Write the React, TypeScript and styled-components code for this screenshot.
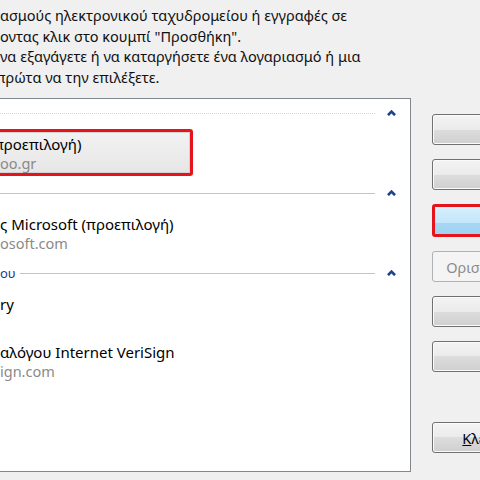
import styled, { createGlobalStyle, css } from "styled-components";

const GlobalStyle = createGlobalStyle`
  html, body {
    margin: 0;
    padding: 0;
    background: #f0f0f0;
    overflow: hidden;
  }
  body {
    font-family: "Noto Sans", "Open Sans", sans-serif;
  }
`;

const Dialog = styled.div`
  width: 480px;
  height: 480px;
  overflow: hidden;
  display: flex;
  flex-direction: column;
  background: #f0f0f0;
  color: #111;
`;

const Intro = styled.div`
  height: 98px;
  box-sizing: border-box;
  padding-top: 5px;
  font-size: 14.5px;
  line-height: 20.5px;
  white-space: nowrap;
`;

// part of a glyph that is cut by the window edge
const Clip = styled.span<{ $cut?: number }>`
  display: inline-block;
  margin-left: ${(p) => -(p.$cut ?? 4)}px;
`;

const Main = styled.div`
  display: flex;
  align-items: stretch;
  height: 374px;
`;

const ListBox = styled.div`
  flex-shrink: 0;
  margin-left: -20px;
  width: 431px;
  box-sizing: border-box;
  border: 1px solid #828790;
  background: #fff;
  padding: 4px 14px 0 8px;
  display: flex;
  flex-direction: column;
  gap: 7px;
`;

const Group = styled.div`
  display: flex;
  flex-direction: column;
  gap: 6px;
`;

const Header = styled.div`
  display: flex;
  align-items: center;
  height: 20px;
`;

const HeaderTitle = styled.span`
  padding-left: 11px;
  margin-right: 4px;
  font-size: 13px;
  color: #1e3a8a;
  white-space: nowrap;
`;

const Rule = styled.div<{ $dotted?: boolean }>`
  flex: 1;
  height: 0;
  border-top: 1px ${(p) => (p.$dotted ? "dotted #d4d4d4" : "solid #a9c9f1")};
`;

const Chevron = styled.svg`
  width: 9px;
  height: 6px;
  margin-left: 12px;
  flex-shrink: 0;
`;

const Items = styled.div`
  display: flex;
  flex-direction: column;
  gap: 1px;
`;

const Item = styled.div<{ $marked?: boolean }>`
  height: 47px;
  box-sizing: border-box;
  align-self: flex-start;
  border: 3px solid transparent;
  border-radius: 3px;
  padding: 3px 8px 0 8px;
  white-space: nowrap;
  ${(p) =>
    p.$marked &&
    css`
      width: 204px;
      border-color: #e5141b;
      background: linear-gradient(#f2f2f2, #e6e6e6);
      box-shadow: inset 0 0 0 1px #d3d3d3;
    `}
`;

const Name = styled.div`
  font-size: 15px;
  line-height: 19px;
  color: #000;
`;

const Server = styled.div`
  font-size: 14.5px;
  line-height: 19px;
  color: #8a8a8a;
`;

const Buttons = styled.div`
  flex-shrink: 0;
  margin-left: 21px;
  width: 200px;
  padding: 16px 0 19px;
  box-sizing: border-box;
  display: flex;
  flex-direction: column;
  gap: 14px;
`;

const Button = styled.button<{ $marked?: boolean; $narrow?: boolean }>`
  height: 31px;
  width: ${(p) => (p.$narrow ? "120px" : "100%")};
  box-sizing: border-box;
  border: 1px solid #707070;
  border-radius: 3px;
  padding: 0;
  font-family: inherit;
  font-size: 14.5px;
  color: #000;
  white-space: nowrap;
  text-align: center;
  background: linear-gradient(#f3f3f3 0%, #ebebeb 50%, #dddddd 50%, #cfcfcf 100%);
  box-shadow: inset 0 0 0 1px #fbfbfb;
  ${(p) =>
    p.$marked &&
    css`
      height: 33px;
      border: 3px solid #e5141b;
      background: linear-gradient(#d6effc 0%, #c4e6fa 60%, #a5d7f3 60%, #9ed3f1 100%);
      box-shadow: none;
    `}
  &:disabled {
    border-color: #adb2b5;
    background: #f4f4f4;
    color: #8c8c8c;
    box-shadow: none;
  }
`;

const Close = styled(Button)`
  margin-top: auto;
`;

const Caret = () => (
  <Chevron viewBox="0 0 9 6">
    <path d="M1 5.2 L4.5 1.6 L8 5.2" fill="none" stroke="#1a428f" strokeWidth="2.6" />
  </Chevron>
);

const App = () => {
  return (
    <>
      <GlobalStyle />
      <Dialog>
        <Intro>
          <div>ασμούς ηλεκτρονικού ταχυδρομείου ή εγγραφές σε</div>
          <div>οντας κλικ στο κουμπί "Προσθήκη".</div>
          <div>να εξαγάγετε ή να καταργήσετε ένα λογαριασμό ή μια</div>
          <div>
            <Clip>π</Clip>ρώτα να την επιλέξετε.
          </div>
        </Intro>
        <Main>
          <ListBox>
            <Group>
              <Header>
                <Rule $dotted />
                <Caret />
              </Header>
              <Items>
                <Item $marked>
                  <Name>
                    <Clip $cut={6}>π</Clip>ροεπιλογή)
                  </Name>
                  <Server>oo.gr</Server>
                </Item>
              </Items>
            </Group>
            <Group>
              <Header>
                <Rule />
                <Caret />
              </Header>
              <Items>
                <Item>
                  <Name>ς Microsoft (προεπιλογή)</Name>
                  <Server>osoft.com</Server>
                </Item>
              </Items>
            </Group>
            <Group>
              <Header>
                <HeaderTitle>ου</HeaderTitle>
                <Rule />
                <Caret />
              </Header>
              <Items>
                <Item>
                  <Name>ry</Name>
                </Item>
                <Item>
                  <Name>αλόγου Internet VeriSign</Name>
                  <Server>ign.com</Server>
                </Item>
              </Items>
            </Group>
          </ListBox>
          <Buttons>
            <Button>Προσθήκη...</Button>
            <Button>Κατάργηση</Button>
            <Button $marked>Ιδιότητες</Button>
            <Button disabled>Ορισμός ως προεπιλογής</Button>
            <Button>Εισαγωγή...</Button>
            <Button>Εξαγωγή...</Button>
            <Close $narrow>
              <u>Κ</u>λείσιμο
            </Close>
          </Buttons>
        </Main>
      </Dialog>
    </>
  );
};

export default App;
